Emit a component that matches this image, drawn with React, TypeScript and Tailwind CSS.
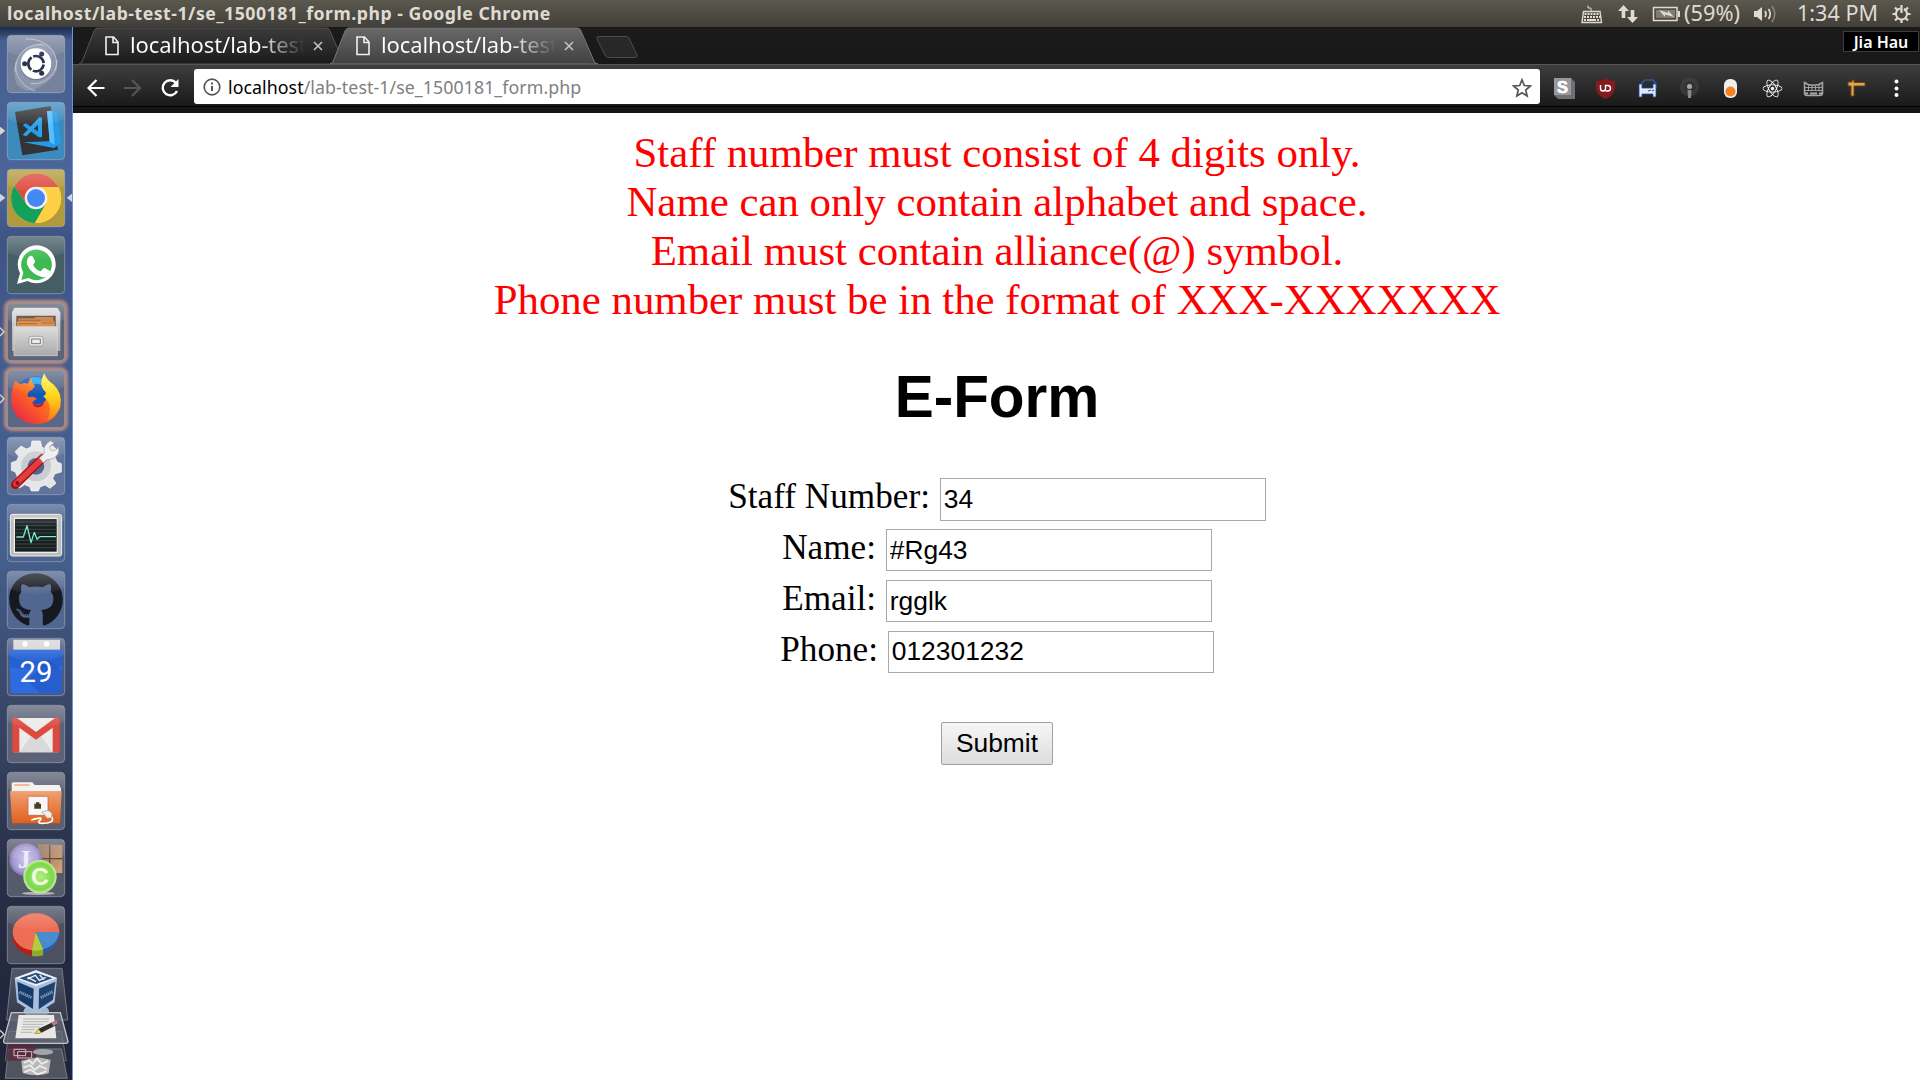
import React from "react";
import { FaGithub, FaReact } from "react-icons/fa";

type TileProps = { fill: string; glow?: boolean; left?: "solid" | "open"; right?: boolean; children: React.ReactNode };

function Tile({ fill, glow, left, right, children }: TileProps) {
  return (
    <svg viewBox="-21 -12 216 198" className="block h-[66px] w-[72px] shrink-0 overflow-visible">
      {glow && <rect x="-3" y="-3" width="180" height="180" rx="16" fill="none" stroke="#e59a72" strokeWidth="10" filter="url(#soft)" opacity=".9" />}
      <rect x="1" y="1" width="172" height="172" rx="12" fill={fill} stroke="#b4bdd0" strokeOpacity=".5" strokeWidth="3" />
      {children}
      <path d="M2 12Q2 2 12 2H162Q172 2 172 12V50Q87 90 2 50Z" fill="url(#shine)" />
      {left === "solid" && <path d="M-21 74L-5 86L-21 99Z" fill="#d6d6d6" />}
      {left === "open" && <path d="M-21 74L-9 86L-21 99" fill="none" stroke="#d6d6d6" strokeWidth="4" />}
      {right && <path d="M195 74L179 86L195 99Z" fill="#d6d6d6" />}
    </svg>
  );
}

function Defs() {
  return (
    <svg className="absolute h-0 w-0">
      <defs>
        <filter id="soft" x="-20%" y="-20%" width="140%" height="140%"><feGaussianBlur stdDeviation="4" /></filter>
        <linearGradient id="shine" x1="0" y1="0" x2="0" y2="1"><stop offset="0" stopColor="#fff" stopOpacity=".26" /><stop offset="1" stopColor="#fff" stopOpacity=".02" /></linearGradient>
        <linearGradient id="metal" x1="0" y1="0" x2="0" y2="1"><stop offset="0" stopColor="#dedede" /><stop offset="1" stopColor="#a9a9a9" /></linearGradient>
        <linearGradient id="fox" x1="1" y1="0" x2="0" y2="1"><stop offset="0" stopColor="#ffd21f" /><stop offset=".45" stopColor="#ff6f1e" /><stop offset="1" stopColor="#e8154f" /></linearGradient>
        <linearGradient id="foxtail" x1="0" y1="0" x2="0" y2="1"><stop offset="0" stopColor="#fff44f" /><stop offset=".5" stopColor="#ffd31b" /><stop offset="1" stopColor="#ff7a1a" /></linearGradient>
        <linearGradient id="folder" x1="0" y1="0" x2="0" y2="1"><stop offset="0" stopColor="#f0a070" /><stop offset="1" stopColor="#e0601c" /></linearGradient>
        <radialGradient id="purple"><stop offset="0" stopColor="#cfc6f0" /><stop offset=".75" stopColor="#a79cd3" /><stop offset="1" stopColor="#8378b8" /></radialGradient>
        <radialGradient id="green"><stop offset="0" stopColor="#b4f07e" /><stop offset=".8" stopColor="#7ad748" /><stop offset="1" stopColor="#cdf3a8" /></radialGradient>
        <linearGradient id="wood" x1="0" y1="0" x2="1" y2="1"><stop offset="0" stopColor="#8b6c58" /><stop offset="1" stopColor="#d9a378" /></linearGradient>
        <linearGradient id="fold" x1="0" y1="0" x2="0" y2="1"><stop offset="0" stopColor="#7a7e88" stopOpacity=".55" /><stop offset="1" stopColor="#4a4e5c" stopOpacity=".5" /></linearGradient>
      </defs>
    </svg>
  );
}

function Launcher() {
  return (
    <aside className="flex h-[1053px] w-[73px] shrink-0 flex-col gap-px overflow-hidden border-r border-[#6f93d8] bg-[linear-gradient(180deg,#1c2a4b_0px,#475f91_14px,#4b659a_160px,#3f5485_210px,#435c90_330px,#46608f_520px,#3c4c70_640px,#343f5b_740px,#272e45_860px,#1e2338_1053px)] pt-1">
      <Tile fill="#76829c">
        <path d="M30 150C12 105 25 40 85 30C125 10 152 50 150 105C135 140 90 165 60 168Q45 160 30 150Z" fill="#a2abbf" opacity=".5" />
        <path d="M24 110C25 50 70 22 110 30M56 12C125 10 160 60 145 105M150 75C150 120 110 152 70 145M28 80C20 120 45 155 85 168" fill="none" stroke="#d5dae6" strokeWidth="3" opacity=".65" />
        <circle cx="87" cy="89" r="47" fill="#444e66" opacity=".35" />
        <circle cx="87" cy="86" r="46" fill="#fff" />
        <circle cx="87" cy="86" r="23" fill="none" stroke="#2a3450" strokeWidth="8" strokeDasharray="43 5.2" strokeDashoffset="-2.6" />
        <circle cx="53" cy="86" r="7.5" fill="#2a3450" /><circle cx="104" cy="57" r="7.5" fill="#2a3450" /><circle cx="104" cy="115" r="7.5" fill="#2a3450" />
      </Tile>
      <Tile fill="#3d8abc" left="solid">
        <path d="M24 30L131 12L153 143L46 160Z" fill="#333336" />
        <path d="M120 27L150 29L162 124L141 138L50 121L128 118Z" fill="#249be8" />
        <path d="M120 27L135 26L143 128L128 119Z" fill="#5bbdfa" />
        <path d="M47 70L56 64L105 96V106L94 105Z" fill="#249be8" />
        <path d="M47 99L98 44L105 48V104L93 98V68L58 103Z" fill="#2aa3ee" />
      </Tile>
      <Tile fill="#b09a3e" left="solid" right>
        <circle cx="87" cy="87" r="75" fill="#ffcf43" />
        <path d="M22 50A75 75 0 0 1 152 50L155 54H87L57 104Z" fill="#dd4c40" />
        <path d="M22 50A75 75 0 0 0 84 162L117 104H57Z" fill="#13a05d" />
        <path d="M87 54H155A75 75 0 0 1 84 162L117 104Z" fill="#ffcf43" />
        <circle cx="87" cy="87" r="34" fill="#f1f1f1" /><circle cx="87" cy="87" r="27" fill="#4487f5" />
      </Tile>
      <Tile fill="#455d64">
        <path d="M30 144L39 112A57 57 0 1 1 62 135Z" fill="#fff" />
        <path d="M43 132L49 110A46 46 0 1 1 65 126Z" fill="#3dbb52" />
        <path d="M65 63q8-8 13 0l6 13q1 5-6 10q8 15 23 20l7-8q3-3 7-1l13 7q3 2 0 9q-7 13-24 10q-32-8-44-38q-3-12 5-22Z" fill="#fff" />
      </Tile>
      <Tile fill="#5b6478" glow left="open">
        <path d="M22 14H151L160 28V144H15V28Z" fill="url(#metal)" />
        <path d="M28 38H146V73H28Z" fill="#57473d" />
        <path d="M34 46H82L86 42H138L144 73H30Z" fill="#c97e3c" /><path d="M30 56H143V73H29Z" fill="#d98f4a" /><path d="M34 52H100M104 60H140M32 62H90" stroke="#8f4f22" strokeWidth="2" />
        <path d="M21 71H151V158H21Z" fill="url(#metal)" stroke="#ddd" strokeWidth="2" />
        <rect x="66" y="100" width="42" height="29" rx="6" fill="#ececec" stroke="#888" strokeWidth="2" /><rect x="74" y="108" width="26" height="14" fill="#eee" stroke="#777" strokeWidth="3" />
      </Tile>
      <Tile fill="#5a6785" glow left="open">
        <circle cx="86" cy="84" r="65" fill="#1557b8" />
        <path d="M66 24Q96 14 116 34L108 48Q88 36 76 46Z" fill="#21a6ef" />
        <path d="M24 32Q32 38 40 43Q52 36 62 42Q66 30 76 24Q72 38 84 48L75 60Q64 62 62 74Q60 82 70 81Q84 77 89 88Q80 91 76 98Q96 110 112 96Q122 86 120 70Q150 80 160 105Q146 162 88 162Q26 159 14 106Q8 73 24 32Z" fill="url(#fox)" />
        <path d="M112 10Q118 30 139 43Q168 70 160 111Q150 139 120 151Q132 128 128 106Q124 92 108 78Q118 76 116 66Q92 46 112 10Z" fill="url(#foxtail)" />
        <path d="M76 98Q96 112 112 96Q108 114 88 112Q78 108 76 98Z" fill="#b31b3c" />
      </Tile>
      <Tile fill="#62749b">
        <path d="M75 12H100L105 31L119 37L137 26L154 43L144 60L150 75L163 80V105L144 110L137 124L147 139L129 154L114 144L99 150L94 162H73L68 149L53 143L37 153L20 135L31 119L25 105L13 100V77L29 71L35 58L24 44L42 27L58 36L72 30Z" fill="#e6e6e6" stroke="#fff" strokeWidth="2" />
        <circle cx="87" cy="88" r="45" fill="#c9ccd2" /><circle cx="87" cy="88" r="25" fill="#53658e" />
        <path d="M25 143L108 63" stroke="#a51216" strokeWidth="26" strokeLinecap="round" /><path d="M27 140L104 67" stroke="#e23c3c" strokeWidth="17" strokeLinecap="round" />
        <path d="M97 63L112 49Q106 25 130 12L141 17L127 30L133 42L148 38L154 30Q161 56 132 67L120 68L109 78Z" fill="#eee" stroke="#999" strokeWidth="2" />
        <circle cx="31" cy="138" r="6" fill="#7e1015" />
      </Tile>
      <Tile fill="#4d648e">
        <rect x="10" y="31" width="154" height="125" rx="7" fill="#bdbdbd" stroke="#eee" strokeWidth="3" /><rect x="20" y="41" width="132" height="106" fill="#eee" /><rect x="24" y="45" width="125" height="98" fill="#171f20" />
        <path d="M24 54H149M24 65H149M24 76H149M24 87H149M24 109H149M24 120H149M24 131H149" stroke="#3c4747" strokeWidth="3" />
        <path d="M28 99H49L60 65L72 116L82 85L90 106L98 98H147" fill="none" stroke="#7de7cb" strokeWidth="4" strokeLinejoin="round" />
      </Tile>
      <Tile fill="#52678f">
        <FaGithub x="4" y="4" size={166} color="#16191f" />
      </Tile>
      <Tile fill="#4b5a7c">
        <path d="M19 5H159V50H19Z" fill="#d5d5d5" /><circle cx="54" cy="18" r="8" fill="#fff" /><circle cx="119" cy="18" r="8" fill="#fff" />
        <path d="M6 35H168L162 166H12Z" fill="#2c6ce0" /><path d="M60 127L127 62L165 100L162 166H100Z" fill="#2358c7" opacity=".7" />
        <path d="M6 35H168L164 87Q87 103 10 87Z" fill="#2057ca" opacity=".55" />
        <text x="87" y="132" textAnchor="middle" fontFamily="Roboto" fontSize="88" fill="#fff">29</text>
      </Tile>
      <Tile fill="#5c6376">
        <path d="M20 39H153V142H20Z" fill="#ebebeb" /><path d="M38 142L76 86H98L136 142Z" fill="#d9d9d9" />
        <path d="M16 43Q16 36 27 37L87 81L147 37Q158 36 158 46V142H137V68L87 104L37 68V142H16Z" fill="#dc4a40" />
      </Tile>
      <Tile fill="#5b5f70">
        <path d="M14 36Q14 31 19 31H76L83 39H157L162 50V73H14Z" fill="#f1f1f1" /><path d="M22 39H68" stroke="#f2a071" strokeWidth="5" />
        <path d="M9 57H164L159 154H15Z" fill="url(#folder)" />
        <rect x="63" y="73" width="60" height="57" rx="4" fill="#f7f7f7" stroke="#b75c30" strokeWidth="2" /><path d="M82 95H87V91H97V95H102V110H82Z" fill="#4a3d23" />
        <path d="M73 144Q110 133 100 144Q84 157 120 153Q145 149 132 132" fill="none" stroke="#fff" strokeWidth="5" /><path d="M105 120L123 115L135 123L134 137L121 139Z" fill="#eee" stroke="#999" strokeWidth="2" />
      </Tile>
      <Tile fill="#565b6c">
        <path d="M92 15L166 18V102H92Z" fill="url(#wood)" /><path d="M128 17V102M92 59H166" stroke="#594434" strokeWidth="4" />
        <ellipse cx="94" cy="163" rx="49" ry="5" fill="#ddd" opacity=".7" />
        <circle cx="56" cy="62" r="49" fill="url(#purple)" /><circle cx="99" cy="113" r="50" fill="url(#green)" />
        <text x="52" y="87" textAnchor="middle" fontFamily="Liberation Serif" fontWeight="700" fontSize="75" fill="#eeeafa">J</text>
        <text x="99" y="139" textAnchor="middle" fontFamily="Liberation Sans" fontWeight="700" fontSize="74" fill="#f3fde6">C</text>
      </Tile>
      <Tile fill="#4c5162">
        <ellipse cx="87" cy="92" rx="70" ry="58" fill="#b41e17" />
        <ellipse cx="87" cy="78" rx="70" ry="56" fill="#ee6e55" />
        <path d="M87 78L75 133V150Q93 153 109 148V130Z" fill="#8cac2b" /><path d="M87 78L75 133Q94 136 109 130Z" fill="#b5cb3d" />
        <path d="M87 78H157V92Q151 129 109 148V130Z" fill="#285d9c" /><path d="M87 78H157Q152 117 109 130Z" fill="#4a8ace" />
      </Tile>
      <svg viewBox="0 409 216 341" className="-mt-[2px] block h-[113.67px] w-[72px] shrink-0">
        <path d="M36 413H186L203 568H20Z" fill="url(#fold)" stroke="#74798a" strokeWidth="3" />
        <path d="M26 602H184L199 690H16Z" fill="#343a4a" stroke="#626775" strokeWidth="3" />
        <path d="M26 655H184L202 743H16Z" fill="#51545e" stroke="#777b84" strokeWidth="3" />
        <ellipse cx="109" cy="542" rx="38" ry="19" fill="#a0b9d7" />
        <path d="M108 419L171 442L164 515L108 551L51 515L44 442Z" fill="#a9bfdb" /><path d="M108 419L171 442L108 467L44 442Z" fill="#e8eff8" />
        <path d="M108 426L158 443L108 460L58 443Z" fill="#294e7b" /><path d="M52 453L101 474L99 535L56 507Z" fill="#173966" /><path d="M117 474L166 453L159 507L116 536Z" fill="#1d4270" />
        <path d="M82 445L106 434L118 449L137 440M83 440L108 453M119 433L132 447" stroke="#eef4fa" strokeWidth="4" fill="none" />
        <path d="M58 484L95 501M122 501L158 483" stroke="#7a9bbd" strokeWidth="9" strokeDasharray="4 2" />
        <path d="M34 546H181L204 632Q204 638 198 638H18Q10 638 11 630Z" fill="#777a84" fillOpacity=".65" stroke="#c2c3c8" strokeWidth="4" />
        <path d="M56 553H162L169 623H46Z" fill="#e8e8e6" /><path d="M70 565H148M70 573H145M68 581H130M66 589H121M64 597H105M62 605H98" stroke="#b5b3b0" strokeWidth="3" />
        <path d="M101 610L116 594L164 572L170 583L121 608Z" fill="#303027" /><path d="M101 610L116 596L124 606Z" fill="#e7cf58" /><path d="M153 575L170 570L174 577L160 586Z" fill="#b77896" />
        <path d="M26 641H108V690H18Z" fill="#5b2739" opacity=".75" /><path d="M42 656H77V675H42ZM53 663H95V682H53Z" fill="#5b2739" stroke="#d2c5c9" strokeWidth="3" />
        <ellipse cx="129" cy="664" rx="31" ry="9" fill="#a4a5a6" /><path d="M64 690L90 684L113 680L152 687L146 728Q108 740 68 727Z" fill="#b8b9b8" />
        <path d="M72 697L88 689L98 700L111 684L125 700L144 691M70 711L91 704L104 718L119 706L141 715M72 725L91 717L113 731L139 722" fill="none" stroke="#eee" strokeWidth="5" />
        <path d="M0 599L12 611L0 623" fill="none" stroke="#d6d6d6" strokeWidth="4" />
      </svg>
    </aside>
  );
}

function StatusBar() {
  return (
    <header className="flex h-[27px] items-center justify-between bg-gradient-to-b from-[#5b584e] to-[#413f39] pl-[7px] font-['Noto_Sans',sans-serif] text-[#dfdbd2]">
      <h1 className="text-[17.700px] leading-[27px] font-bold tracking-[0.500px] whitespace-nowrap">localhost/lab-test-1/se_1500181_form.php - Google Chrome</h1>
      <svg viewBox="1580 0 340 27" className="h-[27px] w-[340px]" fill="#dfdbd2">
        <g fill="none" stroke="#dfdbd2"><path d="M1583.5 11.5H1600L1601.5 22.5H1582Z" strokeWidth="1.4" /><path d="M1591 11V8H1588V5.5" /><path d="M1584.5 14H1599.5M1584 17H1600" strokeWidth="2" strokeDasharray="2 1" /><path d="M1584 20H1600" strokeWidth="2" strokeDasharray="2 1 9 1" /></g>
        <path d="M1623.5 5L1629 11H1625.3V18H1621.7V11H1618ZM1632.5 23L1627 17H1630.7V10H1634.3V17H1638Z" />
        <path d="M1653.5 7.5H1677V20.5H1653.5Z" fill="none" stroke="#dfdbd2" strokeWidth="1.5" /><path d="M1656 10H1675V18H1656Z" opacity=".35" /><path d="M1678 11H1680V17H1678Z" /><path d="M1659 10L1668 13V10.5L1674 17L1665 14.5V17Z" />
        <text x="1684" y="20.5" fontSize="21" fontFamily="Noto Sans" textLength="56" lengthAdjust="spacingAndGlyphs">(59%)</text>
        <path d="M1754 11H1757L1762 7V21L1757 17H1754Z" /><path d="M1765 11Q1767 14 1765 17M1768.5 9Q1772 14 1768.5 19" fill="none" stroke="#dfdbd2" strokeWidth="1.7" /><path d="M1772 6Q1777.5 14 1772 22" fill="none" stroke="#8b877e" strokeWidth="1.5" />
        <text x="1797" y="20.5" fontSize="21" fontFamily="Noto Sans" textLength="81" lengthAdjust="spacingAndGlyphs">1:34 PM</text>
        <circle cx="1901.500" cy="14" r="5.500" fill="none" stroke="#dfdbd2" strokeWidth="2" strokeDasharray="31 3.5" strokeDashoffset="-27.700" />
        <path d="M1901.500 5V13M1892.500 14H1896M1907 14H1910.500M1901.500 20V23M1895 7.500L1898 10.500M1908 7.500L1905 10.500M1895 20.500L1898 17.500M1908 20.500L1905 17.500" stroke="#dfdbd2" strokeWidth="2.200" />
      </svg>
    </header>
  );
}

function PageIcon() {
  return <svg viewBox="0 0 14 20" className="h-5 w-3.5 shrink-0"><path d="M1 1H8.500L13 6V18.500H1ZM8 1V6.500H13" fill="none" stroke="#f0f0f0" strokeWidth="1.600" /></svg>;
}

function Tab({ active }: { active?: boolean }) {
  return (
    <div className={active ? "relative -ml-[19px] flex h-[37px] w-[270px] items-center pl-[26px]" : "relative flex h-[37px] w-[270px] items-center pl-[26px]"}>
      <svg viewBox="0 0 270 37" className="absolute inset-0 h-[37px] w-[270px]">
        <defs>
          <linearGradient id="tabOn" x1="0" y1="0" x2="0" y2="1"><stop offset="0" stopColor="#696969" /><stop offset="1" stopColor="#404040" /></linearGradient>
          <linearGradient id="tabOff" x1="0" y1="0" x2="0" y2="1"><stop offset="0" stopColor="#3b3b3b" /><stop offset="1" stopColor="#1b1b1b" /></linearGradient>
        </defs>
        <path d="M0 37L3 35L15 4Q16.500 1 19 1H247Q250 1 251 4L264 34Q265 37 268 37Z" fill={active ? "url(#tabOn)" : "url(#tabOff)"} stroke={active ? "#777" : "#555"} />
      </svg>
      <div className="relative flex items-center">
        <PageIcon />
        <span className="-mt-[3px] ml-[11px] bg-[linear-gradient(90deg,#fff_128px,transparent_175px)] bg-clip-text font-['Noto_Sans',sans-serif] text-[22px] leading-[30px] tracking-[-0.1px] whitespace-nowrap text-transparent">localhost/lab-test</span>
      </div>
      <svg viewBox="0 0 10 10" className="relative mr-[26px] ml-auto h-[10px] w-[10px] shrink-0"><path d="M1 1L9 9M9 1L1 9" stroke="#c4c4c4" strokeWidth="1.600" /></svg>
    </div>
  );
}

function Extensions() {
  return (
    <svg viewBox="1540 65 380 41" className="h-[41px] w-[380px] shrink-0">
      <path d="M1554 78H1571L1575 82V99H1558L1554 95Z" fill="#6e7073" /><path d="M1554 78H1571V95H1554Z" fill="#97999c" />
      <text x="1562.500" y="92.500" textAnchor="middle" fontFamily="Liberation Sans" fontWeight="700" fontSize="16.500" fill="#fff" stroke="#fff" strokeWidth=".6">S</text>
      <path d="M1605.500 78Q1609.500 81 1615 81V88Q1615 95 1605.500 99Q1596 95 1596 88V81Q1601.500 81 1605.500 78Z" fill="#831b1f" />
      <path d="M1600.500 85V88.500Q1600.500 91 1603 91Q1605.500 91 1605.500 88.500V85.500H1607.500Q1610.500 85.500 1610.500 88.200Q1610.500 91 1607.500 91H1605.500" fill="none" stroke="#fff" strokeWidth="1.400" />
      <path d="M1641 88V84L1645 80H1653L1656 84V89" fill="none" stroke="#3156a5" strokeWidth="1.600" /><path d="M1639 84H1642V88H1653V84H1656V97H1653V94H1642V97H1639Z" fill="#dbeaff" stroke="#244693" strokeWidth=".8" /><path d="M1648 91L1651 90M1652 91L1654 90" stroke="#3156a5" strokeWidth="1.200" />
      <circle cx="1689.500" cy="87" r="9.500" fill="#4b4b4b" opacity=".5" /><circle cx="1689.500" cy="87" r="6" fill="#333" /><circle cx="1689.500" cy="86.500" r="2.500" fill="#a9a9a9" /><path d="M1687.500 90H1691.500L1691 98H1688Z" fill="#828b8d" />
      <rect x="1724" y="79" width="13" height="19" rx="6" fill="#efefef" /><circle cx="1730.500" cy="91.500" r="5" fill="#f58320" />
      <FaReact x="1762.500" y="78.500" size={20} color="#f2f2f2" />
      <path d="M1804.500 82.500L1808 84.500Q1813.500 86 1819 84.500L1822.500 82.500V94Q1822 95.500 1820 95.500H1807Q1805 95.500 1804.500 94Z" fill="#2c2c2c" stroke="#a5a5a5" strokeWidth="1.500" /><path d="M1805 87.500H1822M1805 90.500H1822M1808.500 85V91M1812 86V91M1815.500 86V91M1819 85V91" stroke="#a9a9a9" strokeWidth=".9" /><path d="M1805 93.500H1808M1810 93.500H1817M1819 93.500H1822" stroke="#a9a9a9" strokeWidth="2" />
      <path d="M1848 82H1852V80H1854V82.500H1865V86H1854V96H1851V86H1848Z" fill="#e0a84d" stroke="#704316" />
      <circle cx="1896.500" cy="81.500" r="2" fill="#fff" /><circle cx="1896.500" cy="88.500" r="2" fill="#fff" /><circle cx="1896.500" cy="95" r="2" fill="#fff" />
    </svg>
  );
}

function BrowserChrome() {
  return (
    <div>
      <div className="flex h-[37px] bg-gradient-to-b from-[#1b1b1b] to-[#181818] pl-[6px]">
        <Tab />
        <Tab active />
        <svg viewBox="0 0 46 37" className="-ml-[5px] h-[37px] w-[46px]"><path d="M4 9.500H31Q33 9.500 34 11L42 28Q43 30.500 40 30.500H14Q11 30.500 10 28L2 12Q1 9.500 4 9.500Z" fill="#282828" stroke="#4c4c4c" /></svg>
        <div className="mt-1 mr-px ml-auto flex h-[21px] w-[76px] items-center justify-center border border-[#3c3c3c] bg-black font-['Noto_Sans',sans-serif] text-[16px] font-semibold text-white">Jia Hau</div>
      </div>
      <div className="flex h-[42px] items-center border-t border-[#555] bg-gradient-to-b from-[#3e3e3e] to-[#1a1a1a]">
        <svg viewBox="73 65 121 41" className="h-[41px] w-[121px] shrink-0" fill="none" strokeWidth="2.200">
          <path d="M104.500 88H89M96.500 80L88.500 88L96.500 96" stroke="#fff" /><path d="M124 88H140M132 80L140 88L132 96" stroke="#555" />
          <path d="M176 83A7.500 7.500 0 1 0 177 91" stroke="#fff" strokeWidth="2.400" /><path d="M178.500 79V87H170.500Z" fill="#fff" />
        </svg>
        <div className="mt-px flex h-[35px] flex-1 items-center rounded-[3px] bg-white px-[9px] font-['Noto_Sans',sans-serif] text-[17.800px]">
          <svg viewBox="0 0 18 18" className="mt-px h-[18px] w-[18px]"><circle cx="9" cy="9" r="7.800" fill="none" stroke="#555" strokeWidth="1.700" /><path d="M9 8V13M9 4.500V6.500" stroke="#555" strokeWidth="2" /></svg>
          <p className="mt-[3px] ml-[7px] tracking-[0.060px] whitespace-nowrap text-[#808080]"><span className="text-black">localhost</span>/lab-test-1/se_1500181_form.php</p>
          <svg viewBox="0 0 20 20" className="mt-[3px] mr-[-1px] ml-auto h-5 w-5"><path d="M10 1.800L12.300 7.500L18.300 8L13.700 12L15.100 18L10 14.800L4.900 18L6.300 12L1.700 8L7.700 7.500Z" fill="none" stroke="#555" strokeWidth="1.700" /></svg>
        </div>
        <Extensions />
      </div>
      <div className="h-[7px] border-t border-black bg-[#151515]" />
    </div>
  );
}

const errors = [
  "Staff number must consist of 4 digits only.",
  "Name can only contain alphabet and space.",
  "Email must contain alliance(@) symbol.",
  "Phone number must be in the format of XXX-XXXXXXX",
];

const fields = [
  { label: "Staff Number:", value: "34" },
  { label: "Name:", value: "#Rg43" },
  { label: "Email:", value: "rgglk" },
  { label: "Phone:", value: "012301232" },
];

function FormPage() {
  return (
    <main className="flex flex-1 flex-col items-center bg-white pt-[15px] pl-px font-['Liberation_Serif',serif] text-black">
      <div className="text-center text-[42.850px] leading-[49px] text-[#ff0000]">
        {errors.map((e) => <p key={e}>{e}</p>)}
      </div>
      <h2 className="mt-[39px] font-['Liberation_Sans',sans-serif] text-[58.500px] leading-[68px] font-bold">E-Form</h2>
      <form className="mt-[46px] flex flex-col items-center">
        {fields.map((f) => (
          <label key={f.label} className="flex h-[50.900px] items-start text-[35.200px] leading-[40px]">
            <span className="mr-[9.800px]">{f.label}</span>
            <input defaultValue={f.value} className="mt-px h-[42.600px] w-[326px] border border-[#a9a9a9] px-[3px] font-['Liberation_Sans',sans-serif] text-[26.400px] leading-[30px] outline-none" />
          </label>
        ))}
        <button type="button" className="mt-[41.400px] h-[43px] w-[112px] rounded-[2px] border border-[#a0a0a0] bg-gradient-to-b from-[#f6f6f6] to-[#dddddd] font-['Liberation_Sans',sans-serif] text-[26.400px] leading-[30px]">Submit</button>
      </form>
    </main>
  );
}

export default function App() {
  return (
    <div className="flex h-[1080px] w-[1920px] flex-col overflow-hidden bg-white">
      <Defs />
      <StatusBar />
      <div className="flex h-[1053px]">
        <Launcher />
        <div className="flex min-w-0 flex-1 flex-col">
          <BrowserChrome />
          <FormPage />
        </div>
      </div>
    </div>
  );
}
